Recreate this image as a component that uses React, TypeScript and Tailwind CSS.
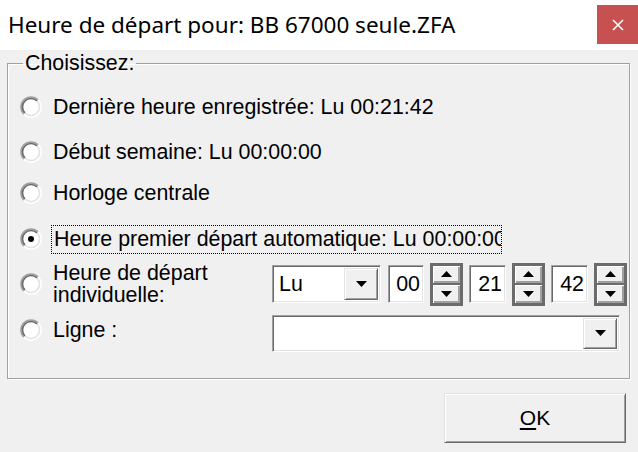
import type { ReactNode } from 'react'

const sunken =
  'border border-t-[#a0a0a0] border-l-[#a0a0a0] border-r-white border-b-white shadow-[inset_1px_1px_0_#696969,inset_-1px_-1px_0_#e3e3e3]'
const raised =
  'border border-t-[#e3e3e3] border-l-[#e3e3e3] border-r-[#696969] border-b-[#696969] shadow-[inset_1px_1px_0_white,inset_-1px_-1px_0_#a0a0a0]'

function Radio({ checked = false }: { checked?: boolean }) {
  const c = 11
  const arc = (r: number) => {
    const d = r * Math.SQRT1_2
    return {
      ul: `M ${c - d} ${c + d} A ${r} ${r} 0 0 1 ${c + d} ${c - d}`,
      lr: `M ${c + d} ${c - d} A ${r} ${r} 0 0 1 ${c - d} ${c + d}`,
    }
  }
  const outer = arc(10)
  const inner = arc(8.5)
  return (
    <svg width="22" height="22" viewBox="0 0 22 22" className="shrink-0">
      <circle cx={c} cy={c} r="8" fill="white" />
      <path d={outer.ul} stroke="#a0a0a0" strokeWidth="1.6" fill="none" />
      <path d={outer.lr} stroke="#ffffff" strokeWidth="1.6" fill="none" />
      <path d={inner.ul} stroke="#696969" strokeWidth="1.6" fill="none" />
      <path d={inner.lr} stroke="#e3e3e3" strokeWidth="1.6" fill="none" />
      {checked && <circle cx={c} cy={c} r="3" fill="black" />}
    </svg>
  )
}

function Arrow({ up = false }: { up?: boolean }) {
  return (
    <svg width="11" height="6" viewBox="0 0 11 6">
      <polygon points={up ? '0,6 11,6 5.5,0' : '0,0 11,0 5.5,6'} fill="black" />
    </svg>
  )
}

function Combo({ value, className }: { value?: string; className: string }) {
  return (
    <div className={`flex items-stretch bg-white ${sunken} ${className}`}>
      <div className="flex-1 flex items-center pl-[6px]">{value}</div>
      <div className={`w-[34px] m-[2px] flex items-center justify-center bg-[#f0f0f0] ${raised}`}>
        <Arrow />
      </div>
    </div>
  )
}

function Field({ value, w }: { value: string; w: string }) {
  return (
    <div className={`h-[38px] flex items-center justify-end pr-[3px] bg-white ${sunken} ${w}`}>
      {value}
    </div>
  )
}

function Spinner() {
  return (
    <div className="w-[33px] h-[43px] flex flex-col gap-[2px] p-[3px] bg-[#6b6b6b]">
      <div className="flex-1 flex items-center justify-center bg-[#f0f0f0] shadow-[inset_1px_1px_0_white,inset_-2px_-2px_0_#a0a0a0]">
        <Arrow up />
      </div>
      <div className="flex-1 flex items-center justify-center bg-[#f0f0f0] shadow-[inset_1px_1px_0_white,inset_-2px_-2px_0_#a0a0a0]">
        <Arrow />
      </div>
    </div>
  )
}

function Row({ checked, mt, children }: { checked?: boolean; mt: string; children: ReactNode }) {
  return (
    <div className={`h-[40px] flex items-center pl-[12px] ${mt}`}>
      <Radio checked={checked} />
      <div className="ml-[11px] flex-1 flex items-center">{children}</div>
    </div>
  )
}

export default function App() {
  return (
    <div className="w-[638px] h-[452px] bg-[#f0f0f0] overflow-hidden font-['Liberation_Sans',Arial,sans-serif] text-black">
      <div className="h-[50px] bg-white flex items-start justify-between">
        <div className="pl-[8px] pt-[8px] text-[22.5px] font-['Noto_Sans',sans-serif]">
          Heure de départ pour: BB 67000 seule.ZFA
        </div>
        <div className="mt-[5px] w-[41px] h-[39px] bg-[#c75050] flex items-center justify-center">
          <svg width="12" height="12" viewBox="0 0 12 12">
            <path d="M1 1 L11 11 M11 1 L1 11" stroke="white" strokeWidth="1.6" />
          </svg>
        </div>
      </div>

      <fieldset className="mx-[7px] mt-[3px] w-[623px] h-[326px] border border-[#a0a0a0] shadow-[inset_1px_1px_0_white,1px_1px_0_white] text-[21.4px]">
        <legend className="ml-[15px] px-[2px] leading-[20px]">Choisissez:</legend>
        <Row mt="mt-[14px]">Dernière heure enregistrée: Lu 00:21:42</Row>
        <Row mt="mt-[5px]">Début semaine: Lu 00:00:00</Row>
        <Row mt="mt-[1px]">Horloge centrale</Row>
        <Row checked mt="mt-[6px]">
          <div className="ml-[-2px] w-[451px] h-[29px] flex items-center pl-[2px] border border-dotted border-black overflow-hidden whitespace-nowrap">
            Heure premier départ automatique: Lu 00:00:00
          </div>
        </Row>
        <Row mt="mt-[5px]">
          <div className="w-[219px] leading-[22px]">
            Heure de départ
            <br />
            individuelle:
          </div>
          <div className="flex items-center gap-[6px]">
            <Combo value="Lu" className="w-[109px] h-[38px] mr-[1px]" />
            <Field value="00" w="w-[36px]" />
            <Spinner />
            <Field value="21" w="w-[37px]" />
            <Spinner />
            <Field value="42" w="w-[37px]" />
            <Spinner />
          </div>
        </Row>
        <Row mt="mt-[6px]">
          <div className="w-[219px]">Ligne :</div>
          <Combo className="w-[348px] h-[37px] mt-[6px]" />
        </Row>
      </fieldset>

      <div className="flex justify-end pr-[12px] mt-[14px]">
        <button className={`w-[182px] h-[50px] bg-[#f0f0f0] text-[21px] ${raised}`}>
          <span className="underline underline-offset-[3px]">O</span>K
        </button>
      </div>
    </div>
  )
}
